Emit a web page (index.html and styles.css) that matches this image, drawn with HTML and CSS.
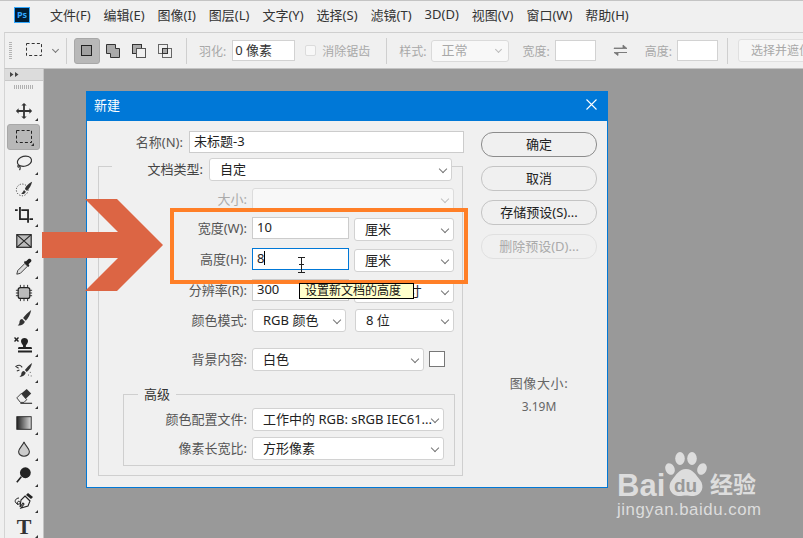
FILE: index.html
```html
<!DOCTYPE html>
<html lang="zh-CN">
<head>
    <meta charset="UTF-8">
    <meta name="viewport" content="width=device-width, initial-scale=1.0">
    <title>新建</title>
    <link rel="stylesheet" href="styles.css">
</head>
<body>
    <header class="menubar">
        <div class="ps-logo">Ps</div>
        <nav class="menu">
            <span>文件(F)</span><span>编辑(E)</span><span>图像(I)</span><span>图层(L)</span><span>文字(Y)</span><span>选择(S)</span><span>滤镜(T)</span><span>3D(D)</span><span>视图(V)</span><span>窗口(W)</span><span>帮助(H)</span>
        </nav>
    </header>

    <div class="options">
        <div class="grip"></div>
        <svg class="opt-marquee" width="17" height="16" viewBox="0 0 17 16"><rect x="0.5" y="0.5" width="15" height="12" fill="none" stroke="#333" stroke-dasharray="3 2.2"/></svg>
        <span class="chevron opt-chevron"></span>
        <span class="sep sep-a"></span>
        <div class="mode active"><svg width="14" height="14" viewBox="0 0 14 14"><rect x="1.5" y="1.5" width="10" height="10" fill="#a0a0a0" stroke="#222"/></svg></div>
        <div class="mode"><svg width="16" height="16" viewBox="0 0 16 16"><path d="M1.5 1.5h9v4h4v9h-9v-4h-4z" fill="#aaa" stroke="#333"/></svg></div>
        <div class="mode"><svg width="16" height="16" viewBox="0 0 16 16"><rect x="1.5" y="1.5" width="9" height="9" fill="#aaa" stroke="#333"/><rect x="5.5" y="5.5" width="9" height="9" fill="#f0f0f0" stroke="#555"/></svg></div>
        <div class="mode"><svg width="16" height="16" viewBox="0 0 16 16"><rect x="1.5" y="1.5" width="9" height="9" fill="none" stroke="#666"/><rect x="5.5" y="5.5" width="9" height="9" fill="none" stroke="#666"/><rect x="5.5" y="5.5" width="5" height="5" fill="#aaa" stroke="#333"/></svg></div>
        <span class="sep sep-b"></span>
        <span class="dim feather-label">羽化:</span>
        <div class="opt-input feather">0 像素</div>
        <span class="opt-check"></span>
        <span class="dim aa-label">消除锯齿</span>
        <span class="sep sep-c"></span>
        <span class="dim style-label">样式:</span>
        <div class="opt-select">正常<span class="chevron"></span></div>
        <span class="dim width-label">宽度:</span>
        <div class="opt-input small"></div>
        <svg class="swap" width="15" height="13" viewBox="0 0 15 13"><path d="M1 4h9V1l4 3.5H1zM14 8.5H5v3L1 8.500h13z" fill="#777" stroke="#777" stroke-width="0.8"/></svg>
        <span class="dim height-label">高度:</span>
        <div class="opt-input small"></div>
        <span class="sep sep-d"></span>
        <div class="opt-mask">选择并遮住...</div>
    </div>

    <div class="workspace">
        <aside class="tools">
            <div class="tools-head"><svg width="9" height="5" viewBox="0 0 9 5"><path d="M0 0l3.500 2.500L0 5zM5 0l3.500 2.500L5 5z" fill="#444"/></svg></div>
            <div class="tools-grip"></div>
            <div class="tool plain"><svg viewBox="0 0 20 20"><path d="M10 1l3 3h-2v5h5V7l3 3-3 3v-2h-5v5h2l-3 3-3-3h2v-5H4v2l-3-3 3-3v2h5V4H7z" fill="#333"/></svg></div>
            <div class="tool selected"><svg class="wide" viewBox="0 0 20 20"><rect x="2.500" y="3.500" width="15" height="12" fill="none" stroke="#222" stroke-dasharray="3 2.100"/></svg></div>
            <div class="tool"><svg viewBox="0 0 20 20"><ellipse cx="10.500" cy="8" rx="8" ry="5.500" transform="rotate(-15 10.500 8)" fill="none" stroke="#333" stroke-width="1.300"/><path d="M4 12c-2 2 0 3 1 2s1 3 0 4" fill="none" stroke="#333" stroke-width="1.300"/></svg></div>
            <div class="tool"><svg viewBox="0 0 20 20"><circle cx="8" cy="11" r="6.500" fill="none" stroke="#333" stroke-dasharray="1.300 1.700"/><path d="M19 2c-3 1-7 5-8 8l2 2c3-2 5-6 6-10zM10 11l2 2c-1 3-4 3-5 2 1-1 2-2 3-4z" fill="#333"/></svg></div>
            <div class="tool"><svg viewBox="0 0 20 20"><path d="M0 4.500h3M5.500 1v13.500h9M7 4.500h7.500v14M16 14.500h4" fill="none" stroke="#222" stroke-width="2"/></svg></div>
            <div class="tool"><svg viewBox="0 0 20 20"><rect x="2" y="3" width="16" height="14" fill="#bbb" stroke="#222" stroke-width="1.300"/><path d="M2 3l16 14M18 3L2 17" stroke="#222" stroke-width="1.200"/></svg></div>
            <div class="tool"><svg viewBox="0 0 20 20"><path d="M11 6L3 14l-1 4 4-1 8-8z" fill="#ddd" stroke="#333"/><path d="M10 5l5 5 1-2-1-1 3-3c1-2-1-4-3-3l-3 3-1-1z" fill="#222"/></svg></div>
            <div class="tool"><svg viewBox="0 0 20 20"><rect x="3.500" y="4" width="13" height="12" rx="2.500" fill="#bbb" stroke="#222" stroke-width="1.300"/><path d="M6 1v3M10 1v3M14 1v3M6 16v3M10 16v3M14 16v3M1 7h3M1 10h3M1 13h3M16 7h3M16 10h3M16 13h3" stroke="#222"/></svg></div>
            <div class="tool"><svg viewBox="0 0 20 20"><path d="M18 0c-3 2-7 6-9 9l3 3c3-3 5-7 6-12zM8 10l3 3c-1 3-5 5-8 4 2-1 2-3 2-4s1-3 3-3z" fill="#333"/></svg></div>
            <div class="tool"><svg class="wide" viewBox="0 0 20 20"><path d="M9 12c1-2-2-3-2-6 0-4 7-4 7 0 0 3-3 4-2 6h5c1 0 1 2 1 2H4s0-2 1-2zM4 15.500h14v2H4z" fill="#222"/><path d="M0 1l1.500 1.500L3 1l1 1-1.500 1.500L4 5 3 6 1.500 4.500 0 6-1 5l1.500-1.500L-1 2z" fill="#222" transform="translate(1 1)"/></svg></div>
            <div class="tool"><svg viewBox="0 0 20 20"><path d="M19 1c-3 2-6 5-8 8l2 2c3-2 5-6 6-10zM10 10l2 2c-1 3-4 5-7 4 2-1 2-2 2-3s1-3 3-3z" fill="#333"/><path d="M8 6C6 3 4 3 1 5l3 2M2 10l3-1" fill="none" stroke="#333" stroke-width="1.200"/><path d="M17 11v1M15 14v1M18 15v1" stroke="#444"/></svg></div>
            <div class="tool"><svg viewBox="0 0 20 20"><path d="M7 6l6-5 5 5-6 6H9z" fill="#333"/><path d="M7 6l-5 5 4 5h4l3-3z" fill="#eee" stroke="#333"/><path d="M6 17h13" stroke="#333" stroke-width="1.300"/></svg></div>
            <div class="tool"><svg viewBox="0 0 20 20"><defs><linearGradient id="grad"><stop offset="0" stop-color="#222"/><stop offset="1" stop-color="#ddd"/></linearGradient></defs><rect x="2" y="3" width="16" height="14" fill="url(#grad)" stroke="#222"/></svg></div>
            <div class="tool"><svg viewBox="0 0 20 20"><path d="M10 2c-1 4-6 7-6 11 0 3 3 5 6 5s6-2 6-5c0-4-5-7-6-11z" fill="#ccc" stroke="#333" stroke-width="1.200"/></svg></div>
            <div class="tool"><svg viewBox="0 0 20 20"><circle cx="11.500" cy="7.500" r="6" fill="#222"/><path d="M7 12l-5 6" stroke="#222" stroke-width="1.800"/></svg></div>
            <div class="tool"><svg class="wide" viewBox="0 0 20 20"><path d="M11 5l5 5-2 5-7 2 3-4-1-1-3 4 1-7z" fill="#f0f0f0" stroke="#222" stroke-width="1.100"/><path d="M14 2l5 4-2 2-5-4z" fill="#222"/><path d="M5 7C2 7 0 10 2 12s5 1 4-1-4 0-2 3" fill="none" stroke="#222"/></svg></div>
            <div class="tool type-tool">T</div>
        </aside>
        <main class="canvas"></main>
    </div>

    <section class="dialog">
        <div class="dialog-title">
            <span>新建</span>
            <svg width="11" height="11" viewBox="0 0 11 11"><path d="M0.500 0.500l10 10M10.500 0.500l-10 10" stroke="#fff" stroke-width="1.100"/></svg>
        </div>
        <div class="dialog-body">
            <form class="form">
                <div class="name-row">
                    <label>名称(N):</label>
                    <div class="input name-input">未标题-3</div>
                </div>
                <div class="group">
                    <div class="row doc-row">
                        <label>文档类型:</label>
                        <div class="select doc-select">自定</div>
                    </div>
                    <div class="row gap-7">
                        <label class="off">大小:</label>
                        <div class="select disabled size-select"></div>
                    </div>
                    <div class="row gap-6 tall">
                        <label>宽度(W):</label>
                        <div class="input num">10</div>
                        <div class="select unit low">厘米</div>
                    </div>
                    <div class="row gap-7 tall">
                        <label>高度(H):</label>
                        <div class="input num focus">8<span class="caret"></span></div>
                        <div class="select unit low">厘米</div>
                    </div>
                    <div class="row gap-7 tall">
                        <label>分辨率(R):</label>
                        <div class="input num">300</div>
                        <div class="select unit low">像素/英寸</div>
                    </div>
                    <div class="row gap-6">
                        <label>颜色模式:</label>
                        <div class="select mode-select">RGB 颜色</div>
                        <div class="select bits-select">8 位</div>
                    </div>
                    <div class="row gap-16">
                        <label>背景内容:</label>
                        <div class="select bg-select">白色</div>
                        <div class="swatch"></div>
                    </div>
                    <div class="group inner">
                        <div class="legend">高级</div>
                        <div class="row">
                            <label>颜色配置文件:</label>
                            <div class="select profile-select">工作中的 RGB: sRGB IEC61...</div>
                        </div>
                        <div class="row gap-6">
                            <label>像素长宽比:</label>
                            <div class="select profile-select">方形像素</div>
                        </div>
                    </div>
                </div>
            </form>
            <div class="side">
                <button class="btn primary" type="button">确定</button>
                <button class="btn" type="button">取消</button>
                <button class="btn" type="button">存储预设(S)...</button>
                <button class="btn off-btn" type="button">删除预设(D)...</button>
                <div class="image-size">
                    <div class="image-size-label">图像大小:</div>
                    <div class="image-size-num">3.19M</div>
                </div>
            </div>
        </div>
    </section>

    <div class="highlight"></div>
    <svg class="arrow" width="122" height="92" viewBox="0 0 122 92"><path d="M0 33H76L43 0H75L121 46 75 92H43L76 59H0z" fill="#dc6544"/></svg>
    <div class="tooltip">设置新文档的高度</div>
    <svg class="ibeam" width="9" height="16" viewBox="0 0 9 16"><path d="M1 0.500h7M1 15.500h7M4.500 0.500v15" stroke="#222" fill="none"/><path d="M2 7.500h5" stroke="#222"/></svg>

    <div class="watermark">
        <div class="wm-top">
            <span class="wm-bai">Bai</span>
            <div class="wm-paw">
                <svg width="42" height="46" viewBox="0 0 42 46"><ellipse cx="5" cy="17" rx="4.500" ry="6" transform="rotate(-25 5 17)" fill="#ddd"/><ellipse cx="15" cy="6.500" rx="4.800" ry="6.500" fill="#ddd"/><ellipse cx="27" cy="6.500" rx="4.800" ry="6.500" fill="#ddd"/><ellipse cx="37" cy="17" rx="4.500" ry="6" transform="rotate(25 37 17)" fill="#ddd"/><path d="M21 17c7 0 10 6 14 11 5 6 2 15-6 16-3 .4-5-.6-8-.6s-5 1-8 .6c-8-1-11-10-6-16 4-5 7-11 14-11z" fill="#ddd"/></svg>
                <span class="wm-du">du</span>
            </div>
            <span class="wm-cn">经验</span>
        </div>
        <div class="wm-url">jingyan.baidu.com</div>
    </div>
</body>
</html>
```

FILE: styles.css
```css
* {
    box-sizing: border-box;
}

html, body {
    margin: 0;
    padding: 0;
    height: 100%;
    overflow: hidden;
}

body {
    font-family: "Noto Sans", "Noto Sans CJK SC", sans-serif;
    font-size: 13px;
    color: #333;
    background-color: #f0f0f0;
    display: flex;
    flex-direction: column;
    border-top: 1px solid #c4c4c4;
}

/* menu bar */
.menubar {
    height: 31px;
    display: flex;
    align-items: center;
    flex-shrink: 0;
    padding-left: 14px;
}

.ps-logo {
    width: 16px;
    height: 16px;
    background-color: #001e36;
    border: 1px solid #31a8ff;
    color: #31a8ff;
    font-size: 9px;
    font-weight: 700;
    line-height: 13px;
    text-align: center;
    margin-top: -3px;
}

.menu {
    display: flex;
    gap: 13px;
    margin-left: 20px;
    margin-top: -4px;
    white-space: nowrap;
}

/* options bar */
.options {
    height: 37px;
    margin-left: 4px;
    flex-shrink: 0;
    display: flex;
    align-items: center;
    border-top: 1px solid #cfcfcf;
    border-left: 1px solid #d4d4d4;
    border-bottom: 1px solid #c4c4c4;
    overflow: hidden;
    white-space: nowrap;
}

.options > * {
    flex-shrink: 0;
}

.grip {
    width: 3px;
    height: 18px;
    margin-left: 4px;
    background: repeating-linear-gradient(#b4b4b4 0 1px, transparent 1px 2px);
}

.opt-marquee {
    margin-left: 14px;
}

.chevron {
    display: block;
    width: 5px;
    height: 5px;
    border-right: 1px solid #777;
    border-bottom: 1px solid #777;
    transform: rotate(45deg);
}

.opt-chevron {
    margin: 0 0 3px 10px;
}

.sep {
    width: 1px;
    height: 26px;
    background-color: #cfcfcf;
}

.sep-a { margin: 0 7px 0 8px; }
.sep-b { margin: 0 12px 0 8px; }
.sep-c { margin: 0 12px 0 16px; }
.sep-d { margin: 0 10px 0 9px; }

.mode {
    width: 26px;
    height: 26px;
    display: flex;
    align-items: center;
    justify-content: center;
}

.mode.active {
    background-color: #b8b8b8;
    border: 1px solid #a8a8a8;
    border-radius: 3px;
}

.dim {
    color: #a8a8a8;
    font-size: 12px;
}

.opt-input {
    height: 21px;
    background-color: #fff;
    border: 1px solid #d2d2d2;
    line-height: 19px;
    padding-left: 2px;
}

.feather {
    width: 63px;
    margin-left: 6px;
}

.opt-input.small {
    width: 41px;
    margin-left: 5px;
}

.opt-check {
    width: 11px;
    height: 11px;
    border: 1px solid #dcdcdc;
    background-color: #f8f8f8;
    border-radius: 2px;
    margin-left: 10px;
}

.aa-label {
    margin-left: 6px;
}

.opt-select {
    width: 78px;
    height: 22px;
    margin-left: 5px;
    background-color: #f8f8f8;
    border: 1px solid #dadada;
    border-radius: 3px;
    color: #a8a8a8;
    padding-left: 9px;
    line-height: 21px;
    display: flex;
    justify-content: space-between;
    align-items: center;
}

.opt-select .chevron {
    margin-right: 7px;
    border-color: #bbb;
    margin-top: -2px;
}

.width-label {
    margin-left: 13px;
}

.swap {
    margin-left: 17px;
}

.height-label {
    margin-left: 17px;
}

.opt-mask {
    width: 100px;
    height: 23px;
    border: 1px solid #e0e0e0;
    border-radius: 3px;
    background-color: #f6f6f6;
    color: #a8a8a8;
    font-size: 12px;
    padding-left: 12px;
    line-height: 21px;
}

/* tools and canvas */
.workspace {
    flex: 1;
    display: flex;
    margin-left: 4px;
    min-height: 0;
}

.tools {
    width: 40px;
    flex-shrink: 0;
    border-left: 1px solid #d4d4d4;
    border-right: 1px solid #c4c4c4;
    overflow: hidden;
}

.tools-head {
    height: 12px;
    background-color: #dcdcdc;
    border-bottom: 1px solid #c8c8c8;
    padding-left: 5px;
    display: flex;
    align-items: center;
}

.tools-grip {
    width: 20px;
    height: 4px;
    margin: 4px 0 9px 9px;
    background: repeating-linear-gradient(90deg, #b0b0b0 0 1px, transparent 1px 2px);
}

.tool {
    position: relative;
    height: 26px;
    display: flex;
    align-items: center;
    justify-content: center;
}

.tool svg {
    width: 18px;
    height: 18px;
}

.tool svg.wide {
    width: 20px;
    height: 20px;
}

.tool::after {
    content: "";
    position: absolute;
    right: 5px;
    bottom: 1px;
    border-left: 3px solid transparent;
    border-bottom: 3px solid #333;
}

.tool.plain::after {
    bottom: 3px;
}

.tool.selected {
    width: 33px;
    margin-left: 2px;
    background-color: #b8b8b8;
    border: 1px solid #a8a8a8;
    border-radius: 3px;
}

.tool.selected::after {
    right: 5px;
    bottom: 3px;
}

.type-tool {
    height: 24px;
    margin-top: 1px;
    font-family: "Liberation Serif", serif;
    font-size: 22px;
    font-weight: 700;
    line-height: 22px;
    color: #333;
}

.canvas {
    flex: 1;
    background-color: #999;
}

/* dialog */
.dialog {
    position: absolute;
    left: 86px;
    top: 91px;
    width: 522px;
    height: 397px;
    background-color: #f0f0f0;
    border: 1px solid #0078d7;
}

.dialog-title {
    height: 29px;
    background-color: #0078d7;
    color: #fff;
    display: flex;
    align-items: center;
    justify-content: space-between;
    padding: 0 10px 4px 7px;
}

.dialog-body {
    display: flex;
}

.form {
    width: 394px;
}

.name-row {
    display: flex;
    align-items: center;
    margin-top: 10px;
    height: 22px;
}

.name-row label {
    width: 96px;
    text-align: right;
    color: #555;
    margin-top: -2px;
}

.input {
    height: 22px;
    background-color: #fff;
    border: 1px solid #ccc;
    color: #222;
    padding-left: 4px;
    line-height: 19px;
}

.name-input {
    width: 275px;
    margin-left: 6px;
}

.group {
    position: relative;
    margin: 13px 0 0 11px;
    width: 365px;
    height: 310px;
    border: 1px solid #cfcfcf;
}

.row {
    display: flex;
    align-items: flex-start;
    height: 23px;
}

.row label {
    width: 153px;
    flex-shrink: 0;
    padding-right: 5px;
    text-align: right;
    line-height: 22px;
    color: #555;
}

.row label.off {
    color: #aaa;
}

.row.tall {
    height: 24px;
}

.gap-6 { margin-top: 6px; }
.gap-7 { margin-top: 7px; }
.gap-16 { margin-top: 16px; }

.doc-row {
    margin: -9px 9px 0 13px;
}

.doc-row label {
    width: 97px;
    background-color: #f0f0f0;
    padding-right: 6px;
    color: #444;
}

.select {
    position: relative;
    height: 23px;
    background-color: #fff;
    border: 1px solid #d2d2d2;
    border-radius: 3px;
    color: #222;
    padding-left: 10px;
    line-height: 21px;
    white-space: nowrap;
    overflow: hidden;
}

.select::after {
    content: "";
    position: absolute;
    right: 5px;
    top: 7px;
    width: 5px;
    height: 5px;
    border-right: 1px solid #777;
    border-bottom: 1px solid #777;
    transform: rotate(45deg);
}

.select.disabled {
    background-color: #f8f8f8;
    border-color: #dcdcdc;
}

.select.disabled::after {
    border-color: #c0c0c0;
}

.doc-select { width: 243px; }
.size-select { width: 202px; }
.unit { width: 100px; margin-left: 5px; }
.low { margin-top: 1px; }
.mode-select { width: 94px; }
.bits-select { width: 99px; margin-left: 9px; }
.bg-select { width: 172px; }
.profile-select { width: 192px; }

.num {
    width: 97px;
}

.focus {
    border-color: #0078d7;
}

.caret {
    display: inline-block;
    width: 1px;
    height: 14px;
    background-color: #000;
    vertical-align: -2px;
}

.swatch {
    width: 16px;
    height: 16px;
    margin: 3px 0 0 5px;
    background-color: #fff;
    border: 1px solid #777;
}

.group.inner {
    margin: 23px 0 0 24px;
    width: 332px;
    height: 72px;
    padding-top: 13px;
}

.inner .row label {
    width: 128px;
    padding-right: 5px;
}

.legend {
    position: absolute;
    left: 14px;
    top: -10px;
    padding: 0 6px;
    background-color: #f0f0f0;
    color: #333;
    line-height: 18px;
}

.side {
    width: 116px;
    display: flex;
    flex-direction: column;
    gap: 9px;
    padding-top: 11px;
}

.btn {
    width: 116px;
    height: 25px;
    padding: 0 0 2px;
    background-color: #f0f0f0;
    border: 1.500px solid #c4c4c4;
    border-radius: 12px;
    font: inherit;
    color: #222;
}

.btn.primary {
    border-color: #8c8c8c;
}

.off-btn {
    border-color: #e0e0e0;
    color: #aaa;
}

.image-size {
    margin-top: 105px;
    text-align: center;
    color: #666;
}

.image-size-label {
    letter-spacing: 0.600px;
}

.image-size-num {
    margin-top: 6px;
    font-size: 12px;
}

/* things lying over the page */
.highlight {
    position: absolute;
    left: 170px;
    top: 208px;
    width: 298px;
    height: 76px;
    border: 4px solid #ff7f27;
}

.arrow {
    position: absolute;
    left: 42px;
    top: 199px;
}

.tooltip {
    position: absolute;
    left: 299px;
    top: 283px;
    width: 115px;
    height: 16px;
    background-color: #ffffcc;
    border: 1px solid #000;
    color: #111;
    font-size: 12px;
    line-height: 14px;
    padding-left: 5px;
}

.ibeam {
    position: absolute;
    left: 297px;
    top: 257px;
}

.watermark {
    position: absolute;
    left: 617px;
    top: 452px;
    color: #ddd;
    width: 150px;
}

.wm-top {
    display: flex;
    align-items: flex-end;
    height: 46px;
}

.wm-bai {
    font-family: "Liberation Sans", sans-serif;
    font-size: 31px;
    font-weight: 700;
    line-height: 31px;
    margin-bottom: -3px;
    width: 48px;
}

.wm-paw {
    position: relative;
    width: 42px;
    height: 46px;
}

.wm-du {
    position: absolute;
    left: 9px;
    top: 24px;
    font-family: "Liberation Sans", sans-serif;
    font-size: 19px;
    font-weight: 700;
    line-height: 20px;
    color: #999;
}

.wm-cn {
    font-size: 23px;
    line-height: 28px;
    font-weight: 700;
    margin-left: 3px;
    white-space: nowrap;
}

.wm-url {
    font-family: "Liberation Sans", sans-serif;
    font-size: 16.800px;
    line-height: 20px;
    margin-top: 2px;
    white-space: nowrap;
    letter-spacing: 0.550px;
}
```
